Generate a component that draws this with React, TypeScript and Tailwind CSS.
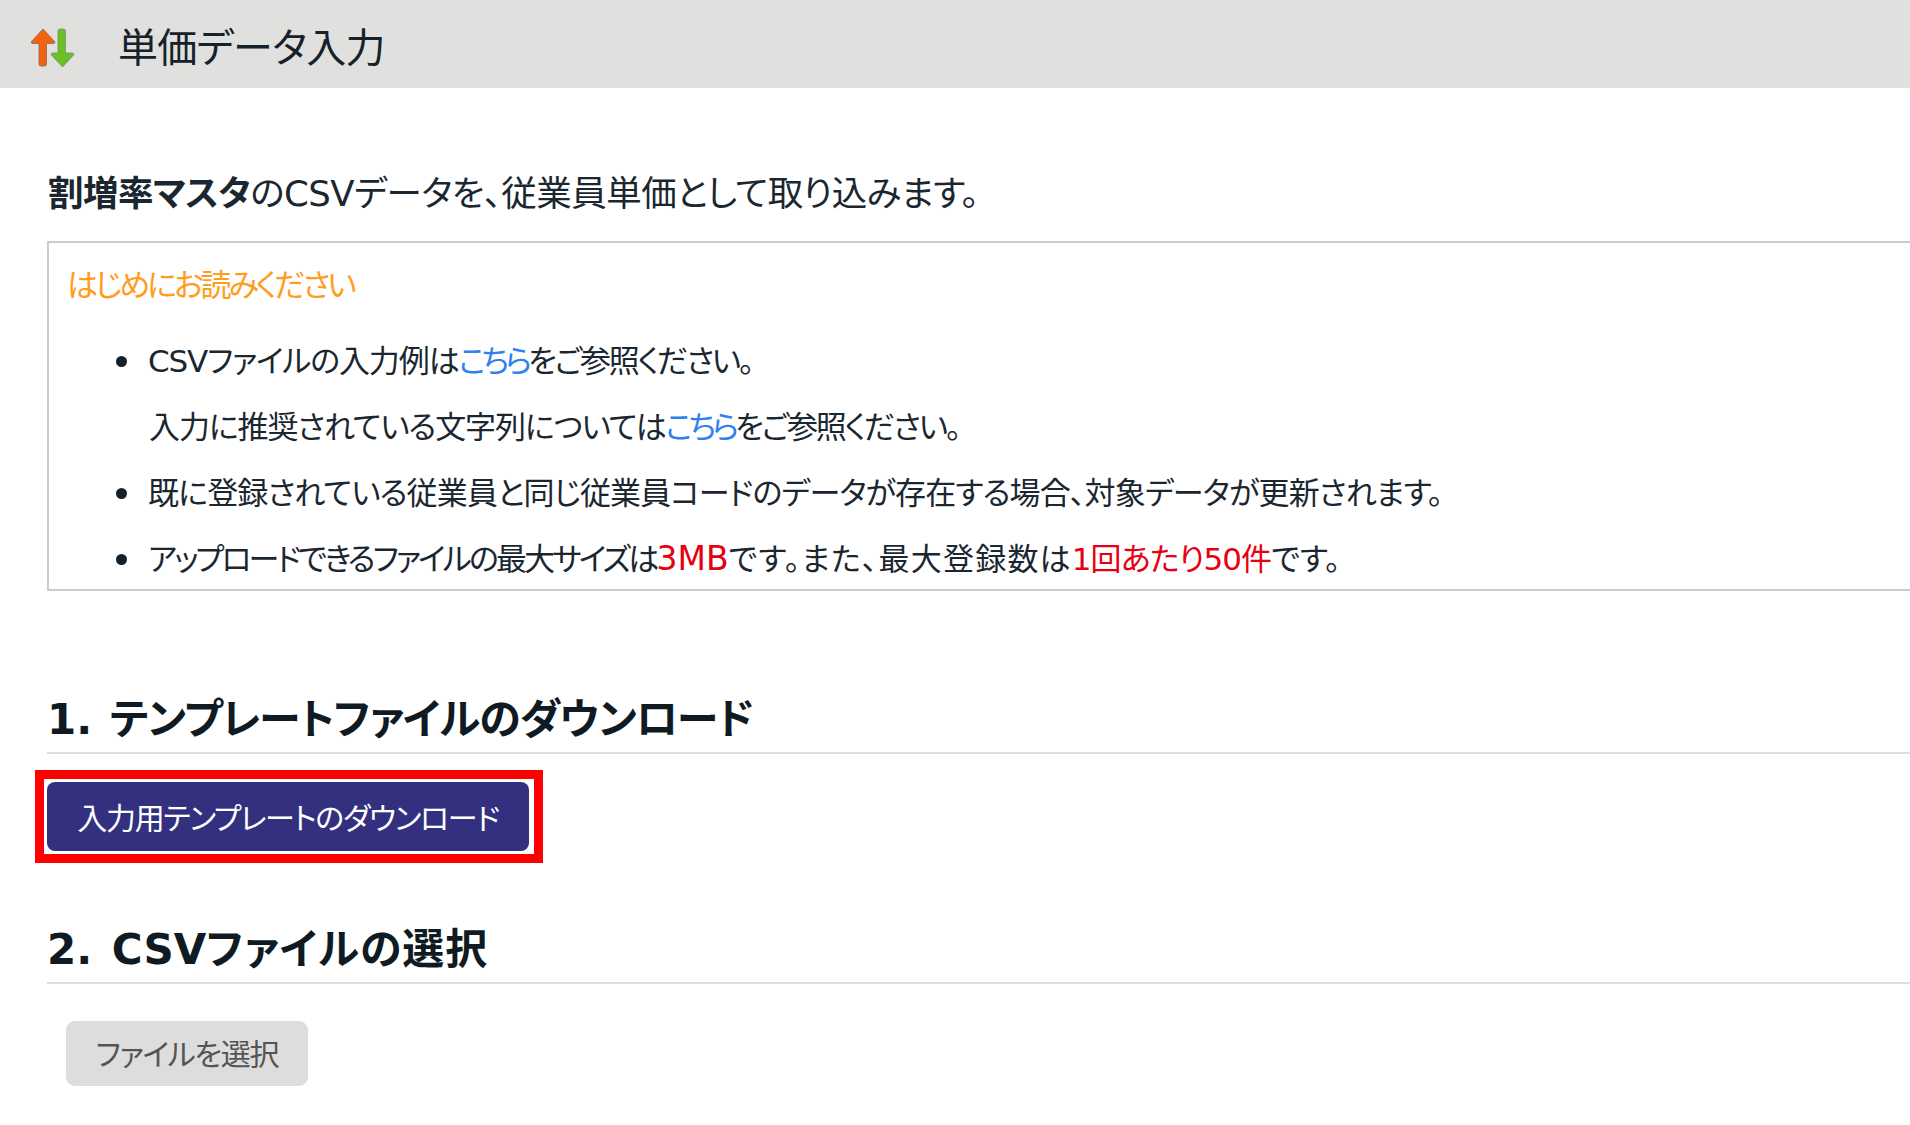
import React from 'react';

const FONT = "font-['DejaVu_Sans','Noto_Sans_CJK_JP',sans-serif] [font-feature-settings:'palt']";

function SortArrows() {
  return (
    <svg width="44" height="40" viewBox="0 0 44 40" className="[filter:blur(0.5px)]">
      <path d="M12 1 L24 14 Q24 15.5 22 15.5 L15.5 15.5 L15.5 36 Q15.5 38 13.5 38 L10 38 Q8 38 8 36 L8 15.5 L2 15.5 Q0 15.5 0 14 Z" fill="#f4610f" stroke="#8a6a50" strokeWidth="0.8" />
      <path d="M31.5 39 L43 26.5 Q43 25 41 25 L34.5 25 L34.5 3 Q34.5 1 32.5 1 L29 1 Q27 1 27 3 L27 25 L22 25 Q20 25 20 26.5 Z" fill="#6cbf26" stroke="#70906a" strokeWidth="0.8" />
    </svg>
  );
}

function Link({ children }: { children: React.ReactNode }) {
  return <span className="text-[#2f80f0] tracking-[-3.8px]">{children}</span>;
}

function Red({ children, className }: { children: React.ReactNode; className: string }) {
  return <span className={`text-[#e60012] ${className}`}>{children}</span>;
}

function Bullet({ children }: { children: React.ReactNode }) {
  return (
    <li className="flex items-center h-[66px]">
      <span className="w-[11px] h-[11px] rounded-full bg-[#14202b] ml-[67px] mr-[21px] shrink-0" />
      <span className="whitespace-nowrap">{children}</span>
    </li>
  );
}

function Section({ children }: { children: React.ReactNode }) {
  return (
    <h2 className="ml-[47px] h-[60px] border-b-2 border-[#dddddd] text-[42px] leading-[52px] font-bold text-[#101a22] whitespace-nowrap">
      {children}
    </h2>
  );
}

export default function App() {
  return (
    <div className={`${FONT} w-full h-[1125px] overflow-hidden bg-white text-[#1b2730]`}>
      <header className="h-[88px] bg-[#e0e0de] flex items-center pl-[31px] pt-[7px]">
        <SortArrows />
        <h1 className="ml-[43px] text-[40px] tracking-[-0.7px] text-[#16212a]">単価データ入力</h1>
      </header>

      <p className="ml-[48px] mt-[77px] h-[53px] leading-[57px] text-[35.5px] tracking-[-0.5px] whitespace-nowrap">
        <b className="font-bold">割増率マスタ</b>のCSVデータを、従業員単価として取り込みます。
      </p>

      <div className="ml-[47px] mt-[23px] h-[350px] border-2 border-r-0 border-[#cccccc] overflow-hidden text-[31px]">
        <div className="ml-[18px] mt-[18px] h-[48px] leading-[48px] tracking-[-3px] text-[#ff9d1e]">はじめにお読みください</div>
        <ul className="mt-[19px]">
          <Bullet>
            <span className="tracking-[-1.1px]">CSVファイルの入力例は</span><Link>こちら</Link><span className="tracking-[-2.1px]">をご参照ください。</span>
          </Bullet>
          <li className="h-[66px] leading-[66px] pl-[100px] whitespace-nowrap">
            <span className="tracking-[-1.1px]">入力に推奨されている文字列については</span><Link>こちら</Link><span className="tracking-[-2.1px]">をご参照ください。</span>
          </li>
          <Bullet>
            <span className="tracking-[-0.84px]">既に登録されている従業員と同じ従業員コードのデータが存在する場合、対象データが更新されます。</span>
          </Bullet>
          <Bullet>
            <span className="tracking-[-2.8px]">アップロードできるファイルの最大サイズは</span><Red className="text-[33px] tracking-[0px]">3MB</Red><span className="tracking-[1.2px]">です。また、最大登録数は</span><Red className="tracking-[-0.9px]">1回あたり50件</Red>です。
          </Bullet>
        </ul>
      </div>

      <div className="mt-[103px]">
        <Section>1. <span className="ml-[3px] tracking-[-1px]">テンプレートファイルのダウンロード</span></Section>
      </div>

      <div className="ml-[35px] mt-[16px] w-[508px] h-[93px] border-[9px] border-[#ff0000] pl-[3px] pr-[5px] py-[3px]">
        <button className="w-full h-full pt-[4px] rounded-[8px] bg-[#32307f] text-white text-[30px] tracking-[-1.3px] leading-none whitespace-nowrap">
          入力用テンプレートのダウンロード
        </button>
      </div>

      <div className="mt-[61px]">
        <Section>2. <span className="ml-[5px]">CSV</span><span className="tracking-[1px]">ファイルの選択</span></Section>
      </div>

      <button className="ml-[66px] mt-[37px] w-[242px] h-[65px] pt-[3px] rounded-[9px] bg-[#dddddd] text-[#555555] text-[30px] tracking-[-1.3px] leading-none">
        ファイルを選択
      </button>
    </div>
  );
}
